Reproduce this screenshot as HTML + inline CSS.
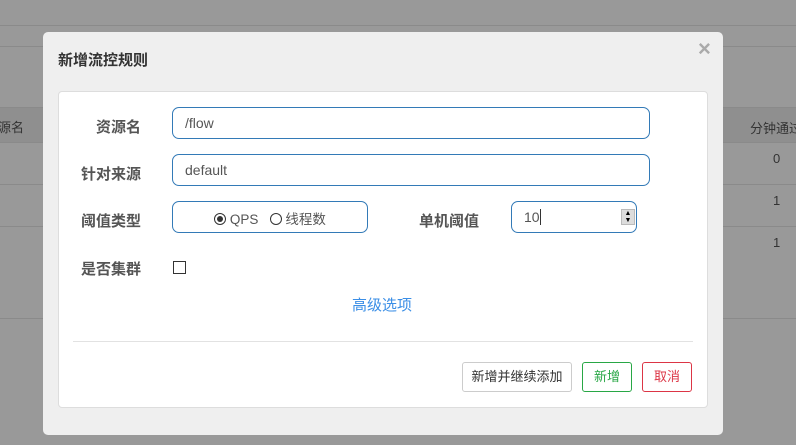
<!DOCTYPE html>
<html><head><meta charset="utf-8"><style>
*{box-sizing:border-box;margin:0;padding:0}
body{width:796px;height:445px;overflow:hidden;background:#999;font-family:"Liberation Sans","Noto Sans CJK SC",sans-serif;color:#333;position:relative;font-size:14px}
.hl{position:absolute;left:0;right:0;height:1px;background:#8a8a8a}
.t{position:absolute;font-size:13px;color:#333;white-space:nowrap}
.modal{position:absolute;left:43px;top:32px;width:680px;height:403px;background:#efefef;border-radius:5px}
.title{position:absolute;left:15px;top:17px;font-size:15px;font-weight:bold;color:#333}
.close{position:absolute;left:655px;top:4px;font-size:22px;color:#aaa;font-weight:bold}
.panel{position:absolute;left:15px;top:59px;width:650px;height:317px;background:#fff;border:1px solid #ddd;border-radius:4px}
.lbl{position:absolute;font-size:15px;font-weight:bold;color:#555;white-space:nowrap}
.inp{position:absolute;border:1px solid #337ab7;border-radius:7px;height:32px;font-size:14px;color:#555;padding:7px 12px;white-space:nowrap}
.btn{position:absolute;top:270px;height:30px;border:1px solid #ccc;border-radius:3px;font-size:13px;text-align:center;line-height:28px;background:#fff;white-space:nowrap}
.radio{display:inline-block;width:12px;height:12px;border:1px solid #333;border-radius:50%;vertical-align:-1px;position:relative}
</style></head><body>
<div class="hl" style="top:25px"></div>
<div class="hl" style="top:46px"></div>
<div style="position:absolute;left:0;right:0;top:107px;height:35px;background:#8f8f8f"></div>
<div class="hl" style="top:107px"></div>
<div class="hl" style="top:142px"></div>
<div class="hl" style="top:184px"></div>
<div class="hl" style="top:226px"></div>
<div class="hl" style="top:318px"></div>
<div class="t" style="left:-2px;top:117px">源名</div>
<div class="t" style="left:750px;top:118px">分钟通过</div>
<div class="t" style="left:773px;top:151px">0</div>
<div class="t" style="left:773px;top:193px">1</div>
<div class="t" style="left:773px;top:235px">1</div>
<div class="modal">
<div class="title">新增流控规则</div>
<div class="close">×</div>
<div class="panel">
<div class="lbl" style="left:37px;top:24px">资源名</div>
<div class="inp" style="left:113px;top:15px;width:478px">/flow</div>
<div class="lbl" style="left:22px;top:71px">针对来源</div>
<div class="inp" style="left:113px;top:62px;width:478px">default</div>
<div class="lbl" style="left:22px;top:118px">阈值类型</div>
<div class="inp" style="left:113px;top:109px;width:196px;text-align:center;padding:6px 0;font-size:13.5px"><span class="radio"><span style="position:absolute;left:2px;top:2px;width:6px;height:6px;border-radius:50%;background:#333"></span></span> QPS &nbsp;&nbsp;<span class="radio"></span> 线程数</div>
<div class="lbl" style="left:360px;top:118px">单机阈值</div>
<div class="inp" style="left:452px;top:109px;width:126px">10<span style="display:inline-block;width:1px;height:16px;background:#333;vertical-align:-3px"></span>
<div style="position:absolute;left:109px;top:7px;width:14px;height:16px;background:#ddd;border:1px solid #bbb;font-size:7px;line-height:7px;text-align:center;color:#000">▲<br>▼</div></div>
<div class="lbl" style="left:22px;top:166px">是否集群</div>
<div style="position:absolute;left:114px;top:169px;width:13px;height:13px;border:1px solid #333"></div>
<div style="position:absolute;left:293px;top:202px;font-size:15px;color:#3a8ee6;white-space:nowrap">高级选项</div>
<div style="position:absolute;left:14px;right:14px;top:249px;height:1px;background:#e2e2e2"></div>
<div class="btn" style="left:403px;width:110px;color:#333">新增并继续添加</div>
<div class="btn" style="left:523px;width:50px;border-color:#28a745;color:#28a745">新增</div>
<div class="btn" style="left:583px;width:50px;border-color:#dc3545;color:#dc3545">取消</div>
</div>
</div>
</body></html>
